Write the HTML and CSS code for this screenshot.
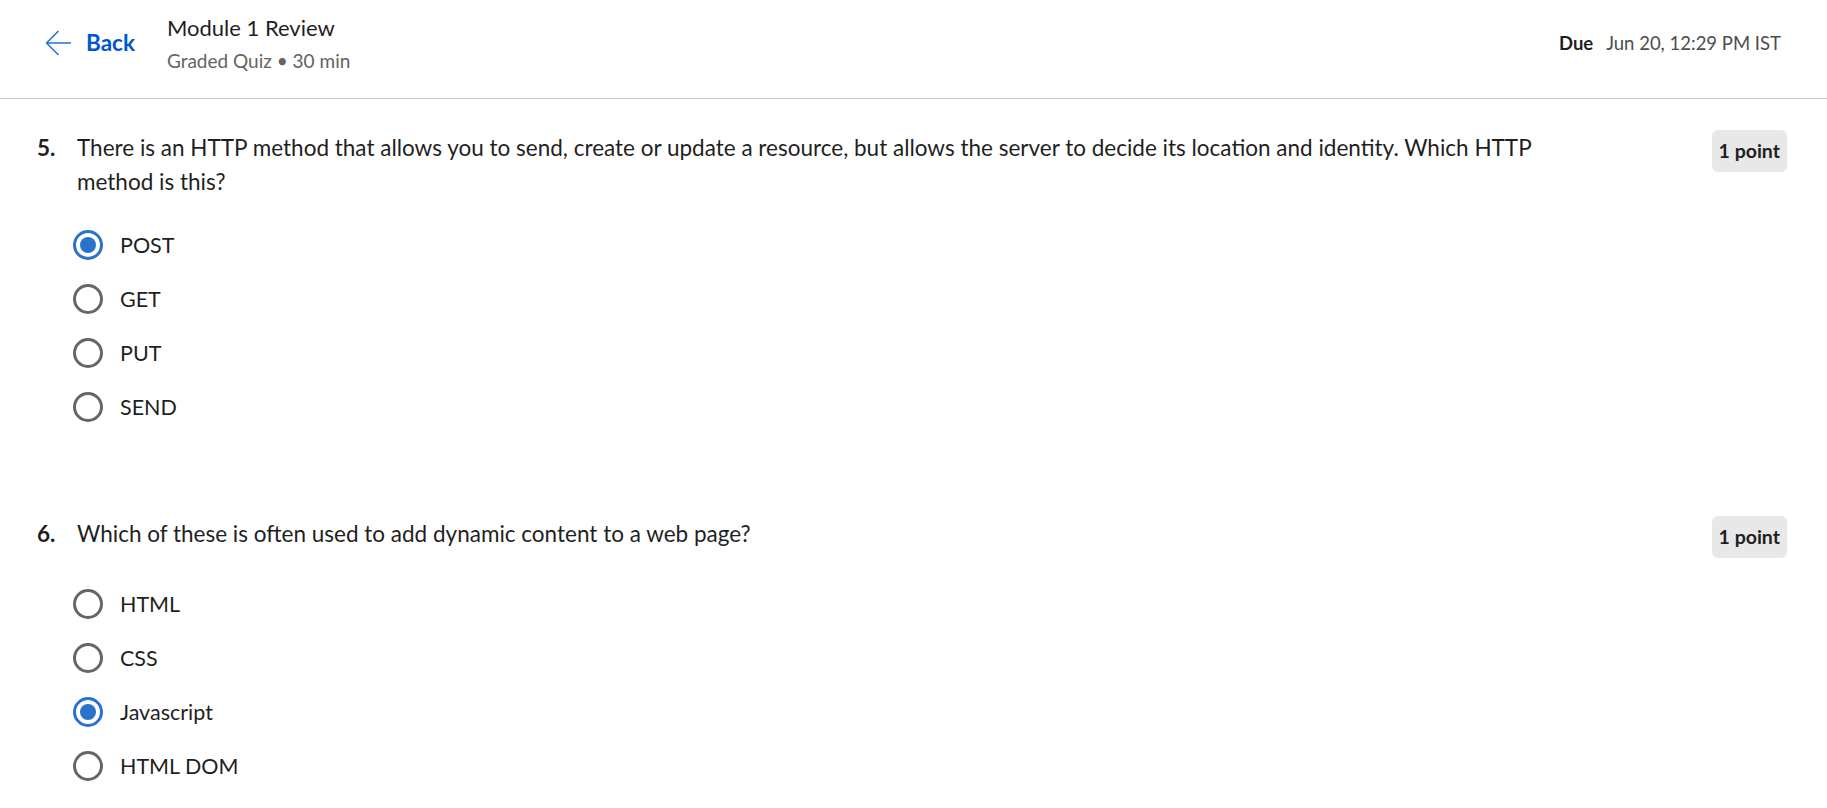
FILE: index.html
```html
<!DOCTYPE html>
<html lang="en">
<head>
<meta charset="utf-8">
<title>Module 1 Review</title>
<link rel="stylesheet" href="styles.css">
</head>
<body>
<header class="topbar">
  <a class="back" href="#">
    <svg class="back-icon" width="26" height="26" viewBox="0 0 26 26" aria-hidden="true">
      <path d="M1.5 13 H25.5 M13 1.5 L1.5 13 L13 24.5" fill="none" stroke="#2a73cc" stroke-width="1.6" stroke-linecap="round" stroke-linejoin="round"/>
    </svg>
    <span class="back-text">Back</span>
  </a>
  <div class="titles">
    <div class="title">Module 1 Review</div>
    <div class="subtitle">Graded Quiz • 30 min</div>
  </div>
  <div class="due"><span class="due-label">Due</span><span class="due-date">Jun 20, 12:29 PM IST</span></div>
</header>

<main class="content">
  <section class="question">
    <div class="q-head">
      <div class="q-num">5.</div>
      <div class="q-text">There is an HTTP method that allows you to send, create or update a resource, but allows the server to decide its location and identity. Which HTTP method is this?</div>
      <div class="points">1 point</div>
    </div>
    <div class="options">
      <label class="option"><span class="radio checked"></span><span class="opt-label">POST</span></label>
      <label class="option"><span class="radio"></span><span class="opt-label">GET</span></label>
      <label class="option"><span class="radio"></span><span class="opt-label">PUT</span></label>
      <label class="option"><span class="radio"></span><span class="opt-label">SEND</span></label>
    </div>
  </section>

  <section class="question second">
    <div class="q-head">
      <div class="q-num">6.</div>
      <div class="q-text">Which of these is often used to add dynamic content to a web page?</div>
      <div class="points">1 point</div>
    </div>
    <div class="options">
      <label class="option"><span class="radio"></span><span class="opt-label">HTML</span></label>
      <label class="option"><span class="radio"></span><span class="opt-label">CSS</span></label>
      <label class="option"><span class="radio checked"></span><span class="opt-label">Javascript</span></label>
      <label class="option"><span class="radio"></span><span class="opt-label">HTML DOM</span></label>
    </div>
  </section>
</main>
</body>
</html>
```
FILE: styles.css
```css
* { box-sizing: border-box; }

html, body {
  margin: 0;
  padding: 0;
  background: #ffffff;
}

body {
  font-family: "Lato", "Open Sans", "Liberation Sans", sans-serif;
  color: #1f1f1f;
  overflow: hidden;
}

/* ---------- header ---------- */
.topbar {
  height: 99px;
  border-bottom: 1px solid #c8c8c8;
  display: flex;
  align-items: flex-start;
  padding: 14px 46px 0 45px;
}

.back {
  height: 58px;
  display: flex;
  align-items: center;
  text-decoration: none;
}

.back-icon {
  display: block;
  flex: none;
}

.back-text {
  margin-left: 15px;
  font-weight: 700;
  font-size: 22.5px;
  line-height: 28px;
  color: #0056d2;
}

.titles {
  margin-left: 32px;
}

.title {
  font-size: 22px;
  line-height: 28px;
  color: #1f1f1f;
}

.subtitle {
  margin-top: 6px;
  font-size: 19px;
  line-height: 26px;
  color: #636363;
}

.due {
  margin-left: auto;
  height: 58px;
  display: flex;
  align-items: center;
  font-size: 18.5px;
  line-height: 24px;
}

.due-label {
  font-weight: 700;
  color: #1f1f1f;
  margin-right: 13px;
}

.due-date {
  color: #4d4d4d;
}

/* ---------- content ---------- */
.content {
  padding: 31px 40px 0 37px;
}

.question.second {
  margin-top: 82px;
}

.q-head {
  display: grid;
  grid-template-columns: 40px 1fr auto;
  align-items: start;
}

.q-num {
  margin-top: 1px;
  font-weight: 700;
  font-size: 22.5px;
  line-height: 34px;
  color: #1f1f1f;
}

.q-text {
  margin-top: 1px;
  font-size: 22.5px;
  line-height: 34px;
  color: #1f1f1f;
}

.points {
  margin-left: 118px;
  height: 42px;
  padding: 0 7px;
  border-radius: 6px;
  background: #e8e8e8;
  font-weight: 700;
  font-size: 19.5px;
  line-height: 42px;
  color: #1f1f1f;
  white-space: nowrap;
}

.options {
  margin-top: 19px;
}

.option {
  height: 54px;
  display: flex;
  align-items: center;
  padding-left: 36px;
}

.radio {
  flex: none;
  width: 30px;
  height: 30px;
  border-radius: 50%;
  border: 3px solid #666666;
  background: #ffffff;
  position: relative;
}

.radio.checked {
  border-color: #2a73cc;
}

.radio.checked::after {
  content: "";
  position: absolute;
  left: 4px;
  top: 4px;
  width: 16px;
  height: 16px;
  border-radius: 50%;
  background: #2a73cc;
}

.opt-label {
  margin-left: 17px;
  font-size: 21.5px;
  line-height: 28px;
  color: #1f1f1f;
}
```
